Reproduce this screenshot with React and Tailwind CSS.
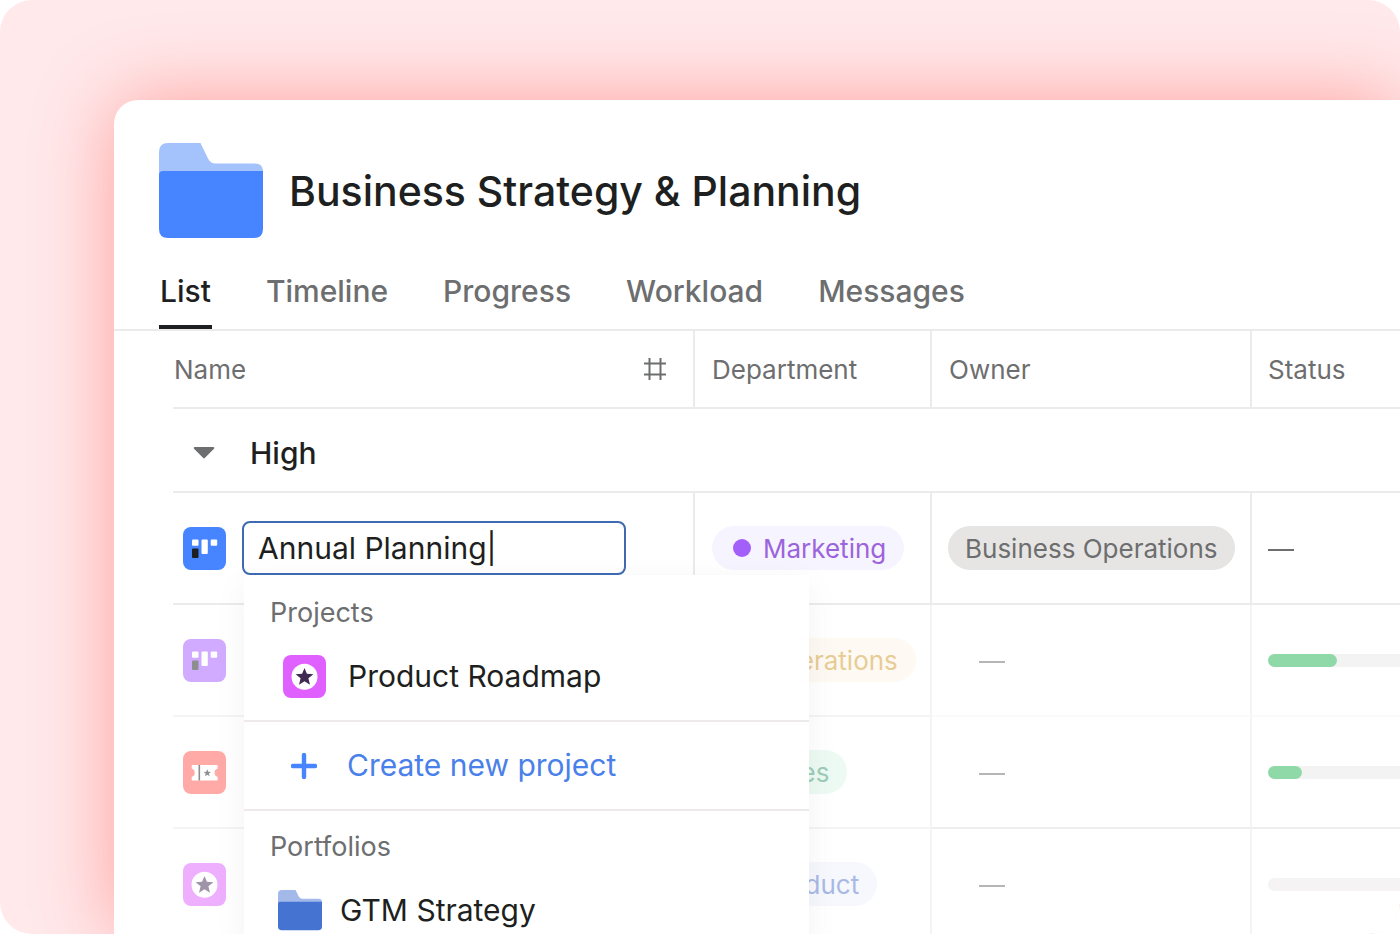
/**
 * App.jsx - Portfolio list view
 *
 * Portfolio card with a title, view tabs and a table of projects grouped by
 * priority. The first row is being edited and shows a suggestion menu under
 * its name field.
 */

import { useState } from 'react';

const TABS = ['List', 'Timeline', 'Progress', 'Workload', 'Messages'];

const ROWS = [
  {
    id: 'operations',
    icon: 'board',
    iconColor: '#a259ff',
    department: 'Operations',
    pill: 'bg-[#fff5e8]',
    dot: 'bg-[#e0a030]',
    text: 'text-[#cf9a2e]',
    line: 'border-b-[#f7f7f7]',
    progress: 69,
  },
  {
    id: 'sales',
    icon: 'ticket',
    iconColor: '#ff584f',
    department: 'Sales',
    pill: 'bg-[#dcf6ea]',
    dot: 'bg-[#3fa37c]',
    text: 'text-[#3d9b74]',
    line: 'border-b-[#dedede]',
    progress: 34,
  },
  {
    id: 'product',
    icon: 'star',
    iconColor: '#e060ff',
    department: 'Product',
    pill: 'bg-[#f1f3fd]',
    dot: 'bg-[#4573d2]',
    text: 'text-[#5476cf]',
    line: 'border-b-[#ebebeb]',
    progress: 0,
  },
];

/** Folder drawing, used for portfolios. */
function FolderIcon({ className, front, back }) {
  return (
    <svg viewBox="0 0 104 95" className={className} aria-hidden="true">
      <path
        d="M0 9Q0 0 9 0H41.500L49 15.500Q51.500 20.500 56.500 20.500H96Q104 20.500 104 28.500V45H0Z"
        fill={back}
      />
      <path
        d="M0 32Q0 28 4 28H104V86Q104 95 95 95H9Q0 95 0 86Z"
        fill={front}
      />
    </svg>
  );
}

/** Rounded project tile with a board, ticket or star glyph. */
function ProjectIcon({ kind, color }) {
  return (
    <svg
      viewBox="0 0 43 43"
      className="size-[43px] shrink-0"
      aria-hidden="true"
    >
      <rect width="43" height="43" rx="8" fill={color} />
      {kind === 'board' && (
        <>
          <rect x="9" y="12.500" width="6.500" height="6.300" rx="1" fill="#fff" />
          <rect x="18.500" y="12.500" width="6.300" height="14.500" rx="1" fill="#fff" />
          <rect x="27.700" y="12.500" width="6.500" height="6.300" rx="1" fill="#fff" />
          <rect x="9" y="21.500" width="6.500" height="9.500" rx="1" fill="#1e1f21" />
        </>
      )}
      {kind === 'ticket' && (
        <>
          <path
            d="M9.500 14H33.800Q34.600 14 34.600 14.800V17.500A4.500 4.500 0 0 0 34.600 26V28.700Q34.600 29.500 33.800 29.500H9.500Q8.700 29.500 8.700 28.700V26A4.500 4.500 0 0 0 8.700 17.500V14.800Q8.700 14 9.500 14Z"
            fill="#fff"
          />
          <path d="M16.300 14V29.500" stroke="#1e1f21" strokeWidth="1.600" />
          <path
            d="M24.300 18.200L25.300 20.700L28 20.900L25.900 22.600L26.600 25.200L24.300 23.800L22 25.200L22.700 22.600L20.600 20.900L23.300 20.700Z"
            fill="#1e1f21"
          />
        </>
      )}
      {kind === 'star' && (
        <>
          <circle cx="21.500" cy="21.700" r="13" fill="#fff" />
          <path
            d="M21.500 12.900L23.900 18.800L30.400 19.200L25.400 23.300L27 29.800L21.500 26.300L16 29.800L17.600 23.300L12.600 19.200L19.100 18.800Z"
            fill="#402a52"
          />
        </>
      )}
    </svg>
  );
}

/** Department tag: colored dot and label on a soft pill. */
function DepartmentPill({ label, pill, dot, text }) {
  return (
    <span
      className={`inline-flex h-11 items-center gap-3 rounded-full pr-[18px] pl-[21px] align-middle text-[26px] ${pill} ${text}`}
    >
      <span className={`size-[18px] rounded-full ${dot}`} />
      {label}
    </span>
  );
}

/** Placeholder for a cell without a value. */
function EmptyValue() {
  return (
    <span
      role="img"
      aria-label="Empty"
      className="inline-block h-[2px] w-[26px] bg-[#6d6e6f] align-middle"
    />
  );
}

/** Suggestion menu shown under the name field. */
function SuggestionMenu() {
  return (
    <div className="absolute top-[54px] left-[2px] z-10 w-[565px] bg-white pb-8 shadow-[0_8px_32px_rgba(0,0,0,0.05)]">
      <section className="h-[147px] border-b-2 border-[#edeae9] pt-[22px]">
        <h3 className="pl-[26px] text-[27px] leading-8 text-[#6d6e6f]">
          Projects
        </h3>
        <button
          type="button"
          className="mt-[26px] flex w-full items-center gap-[22px] pl-[39px] text-left text-[30px] leading-[43px]"
        >
          <ProjectIcon kind="star" color="#e060ff" />
          Product Roadmap
        </button>
      </section>
      <button
        type="button"
        className="flex h-[89px] w-full items-center gap-[30px] border-b-2 border-[#edeae9] pl-[47px] text-left text-[30px] text-[#4a80ea]"
      >
        <svg viewBox="0 0 26 26" className="size-[26px]" aria-hidden="true">
          <path
            d="M13 2V24M2 13H24"
            stroke="#4784ff"
            strokeWidth="4.400"
            strokeLinecap="round"
          />
        </svg>
        Create new project
      </button>
      <section className="pt-5">
        <h3 className="pl-[26px] text-[27px] leading-8 text-[#6d6e6f]">
          Portfolios
        </h3>
        <button
          type="button"
          className="mt-[26px] flex w-full items-center gap-[18px] pl-[34px] text-left text-[30px] leading-[43px]"
        >
          <FolderIcon className="w-11" front="#4573d2" back="#a3b9ea" />
          GTM Strategy
        </button>
      </section>
    </div>
  );
}

/** Table row for an existing project, dimmed while another row is edited. */
function ProjectRow({ row }) {
  const cell = 'h-28 border-b-2 border-[#ebebeb] p-0';

  return (
    <tr className="opacity-50">
      <td className={`${cell} border-r-2 pl-[10px]`}>
        <ProjectIcon kind={row.icon} color={row.iconColor} />
      </td>
      <td className={`${cell} border-r-2 pl-[17px]`}>
        <DepartmentPill
          label={row.department}
          pill={row.pill}
          dot={row.dot}
          text={row.text}
        />
      </td>
      <td className={`${cell} ${row.line} border-r-2 pl-[47px]`}>
        <EmptyValue />
      </td>
      <td className={`${cell} ${row.line} pl-4`}>
        <div className="h-[13px] rounded-l-full bg-[#ebe8e9]">
          {row.progress > 0 && (
            <div
              className="h-full rounded-full bg-[#22b455]"
              style={{ width: row.progress }}
            />
          )}
        </div>
      </td>
    </tr>
  );
}

export default function App() {
  const [activeTab, setActiveTab] = useState('List');
  const [name, setName] = useState('Annual Planning|');
  const head =
    'h-[78px] border-b-2 border-[#ebebeb] p-0 text-left text-[26px] font-normal text-[#6d6e6f]';
  const cell = 'h-28 border-b-2 border-[#ebebeb] p-0';

  return (
    <div className="flex h-screen overflow-hidden rounded-[32px] bg-[#ffe9eb] pt-[100px] pl-[114px] font-['Inter',sans-serif] text-[#1e1f21]">
      <main className="min-w-0 flex-1 overflow-hidden rounded-tl-3xl bg-white shadow-[0_0_80px_#ff9f9b]">
        <header className="flex items-center gap-[26px] pt-[43px] pl-[45px]">
          <FolderIcon
            className="w-[104px] shrink-0"
            front="#4784ff"
            back="#a4c2fc"
          />
          <h1 className="text-[41px] leading-[50px] font-medium whitespace-nowrap">
            Business Strategy &amp; Planning
          </h1>
        </header>

        <nav className="flex gap-[53px] border-b-2 border-[#ebebeb] pt-[33px] pl-[45px]">
          {TABS.map((tab) => (
            <button
              key={tab}
              type="button"
              onClick={() => setActiveTab(tab)}
              className={
                tab === activeTab
                  ? 'border-b-4 border-[#1e1f21] px-px pb-[14px] text-[30px] leading-10 font-medium'
                  : 'border-b-4 border-transparent px-px pb-[14px] text-[30px] leading-10 font-medium text-[#6d6e6f]'
              }
            >
              {tab}
            </button>
          ))}
        </nav>

        <div className="pl-[59px]">
          <table className="w-full table-fixed border-separate border-spacing-0">
            <colgroup>
              <col className="w-[522px]" />
              <col className="w-[237px]" />
              <col className="w-[320px]" />
              <col />
            </colgroup>
            <thead>
              <tr>
                <th className={`${head} border-r-2`}>
                  <div className="flex items-center justify-between pr-[27px] pl-px">
                    Name
                    <svg
                      viewBox="0 0 22 22"
                      className="size-[22px]"
                      aria-hidden="true"
                    >
                      <path
                        d="M5.500 0V22M16.500 0V22M0 5.500H22M0 16.500H22"
                        stroke="#6d6e6f"
                        strokeWidth="2"
                      />
                    </svg>
                  </div>
                </th>
                <th className={`${head} border-r-2 pl-[17px]`}>Department</th>
                <th className={`${head} border-r-2 pl-[17px]`}>Owner</th>
                <th className={`${head} pl-4`}>Status</th>
              </tr>
            </thead>
            <tbody>
              {/* Priority group */}
              <tr>
                <td
                  colSpan={4}
                  className="h-[84px] border-b-2 border-[#ebebeb] p-0"
                >
                  <button
                    type="button"
                    className="flex items-center gap-[35px] pt-[6px] pl-5 text-[30px] leading-10 font-medium"
                  >
                    <svg
                      viewBox="0 0 22 12"
                      className="w-[22px]"
                      aria-hidden="true"
                    >
                      <path
                        d="M1.500 0H20.500Q22 0.500 21 1.700L12 10.800Q11 11.800 10 10.800L1 1.700Q0 0.500 1.500 0Z"
                        fill="#6d6e6f"
                      />
                    </svg>
                    High
                  </button>
                </td>
              </tr>

              {/* Row being edited */}
              <tr>
                <td className={`${cell} border-r-2 pl-[10px]`}>
                  <div className="flex items-center gap-4">
                    <ProjectIcon kind="board" color="#4784ff" />
                    <div className="relative w-[384px]">
                      <input
                        type="text"
                        aria-label="Project name"
                        value={name}
                        onChange={(event) => setName(event.target.value)}
                        className="block h-[54px] w-full rounded-lg border-2 border-[#3f6ab2] bg-white px-[14px] text-[30px] outline-none"
                      />
                      <SuggestionMenu />
                    </div>
                  </div>
                </td>
                <td className={`${cell} border-r-2 pl-[17px]`}>
                  <DepartmentPill
                    label="Marketing"
                    pill="bg-[#f6f4fe]"
                    dot="bg-[#a35ffa]"
                    text="text-[#9c64dc]"
                  />
                </td>
                <td className={`${cell} border-r-2 pl-4`}>
                  <span className="inline-flex h-11 items-center rounded-full bg-[#e6e5e3] px-[17px] align-middle text-[26px] whitespace-nowrap text-[#6d6e6f]">
                    Business Operations
                  </span>
                </td>
                <td className={`${cell} pl-4`}>
                  <EmptyValue />
                </td>
              </tr>

              {ROWS.map((row) => (
                <ProjectRow key={row.id} row={row} />
              ))}
            </tbody>
          </table>
        </div>
      </main>
    </div>
  );
}
